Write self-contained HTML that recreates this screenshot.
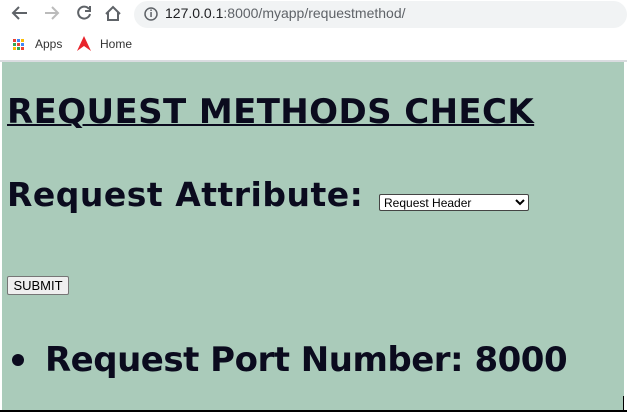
<!DOCTYPE html>
<html><head><style>
*{margin:0;padding:0;box-sizing:border-box}
body{width:627px;height:414px;background:#fff;position:relative;overflow:hidden;font-family:"Liberation Sans",sans-serif}
.t{position:absolute;white-space:nowrap;color:#0b0b1e;font-family:"DejaVu Sans",sans-serif;font-weight:bold}
</style></head><body>
<svg style="position:absolute;left:0;top:0" width="627" height="62">
<g stroke="#5f6368" stroke-width="2" fill="none">
<path d="M27 13H14M19 7l-6 6 6 6"/>
<path d="M45 13h13M52 7l6 6-6 6" stroke="#bbb"/>
<path d="M89 9a6 6 0 1 0 1 5"/><path d="M90 6v5h-5" />
<path d="M106 14l7-7 7 7M108 12v8h10v-8"/>
</g>
<rect x="134" y="1" width="493" height="27" rx="13.5" fill="#f1f3f4"/>
<circle cx="151" cy="14" r="6" fill="none" stroke="#5f6368" stroke-width="1.5"/>
<rect x="150.3" y="12" width="1.5" height="5" fill="#5f6368"/><rect x="150.3" y="9.5" width="1.5" height="1.5" fill="#5f6368"/>
<g fill="#ea4335"><rect x="13" y="39" width="3" height="3"/><rect x="17" y="39" width="3" height="3" fill="#4285f4"/><rect x="21" y="39" width="3" height="3" fill="#fbbc05"/>
<rect x="13" y="43" width="3" height="3" fill="#34a853"/><rect x="17" y="43" width="3" height="3"/><rect x="21" y="43" width="3" height="3" fill="#4285f4"/>
<rect x="13" y="47" width="3" height="3" fill="#fbbc05"/><rect x="17" y="47" width="3" height="3" fill="#34a853"/><rect x="21" y="47" width="3" height="3"/></g>
<path d="M84 36l-7 15 7-5 7 5z" fill="#e8242c"/>
<rect x="0" y="60" width="627" height="2" fill="#dadce0"/>
</svg>
<div style="position:absolute;left:165px;top:5px;font-size:14px;color:#202124">127.0.0.1<span style="color:#5f6368">:8000/myapp/requestmethod/</span></div>
<div style="position:absolute;left:35px;top:37px;font-size:12px;color:#333">Apps</div>
<div style="position:absolute;left:100px;top:37px;font-size:12px;color:#333">Home</div>
<div style="position:absolute;left:2px;top:62px;width:622px;height:348px;background:#aacbba"></div>
<div style="position:absolute;left:0;top:410px;width:627px;height:2px;background:#000"></div>
<div style="position:absolute;left:623px;top:396px;width:1px;height:14px;background:#000"></div>
<div class="t" style="left:7px;top:92px;font-size:34px;letter-spacing:0.4px;text-decoration:underline;text-decoration-thickness:2px">REQUEST METHODS CHECK</div>
<div class="t" style="left:7px;top:175px;font-size:33px;letter-spacing:0.5px">Request Attribute:</div>
<select style="position:absolute;left:379px;top:194px;width:150px;height:17px;font-size:12px;font-family:'Liberation Sans',sans-serif;background:#fff;border:1px solid #444;border-radius:2px">
<option>Request Header</option></select>
<button style="position:absolute;left:7px;top:276px;width:62px;height:19px;font-size:13px;font-family:'Liberation Sans',sans-serif;background:#efefef;border:1px solid #767676;border-radius:2px;color:#000">SUBMIT</button>
<div style="position:absolute;left:12px;top:354px;width:12px;height:12px;border-radius:50%;background:#0b0b1e"></div>
<div class="t" style="left:45px;top:340px;font-size:34px;letter-spacing:-0.5px">Request Port Number: 8000</div>
</body></html>
